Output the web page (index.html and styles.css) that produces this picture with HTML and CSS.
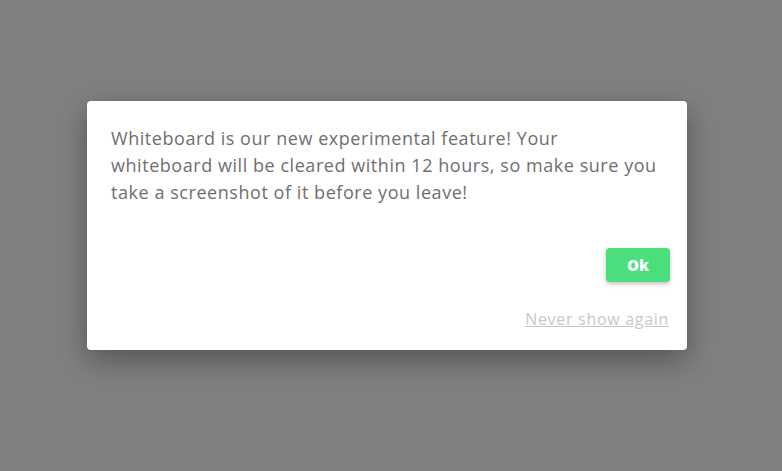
FILE: index.html
```html
<!DOCTYPE html>
<html>
<head>
<meta charset="utf-8">
<link rel="stylesheet" href="styles.css">
</head>
<body>
<div class="overlay">
  <div class="dialog">
    <p class="message">Whiteboard is our new experimental feature! Your whiteboard will be cleared within 12 hours, so make sure you take a screenshot of it before you leave!</p>
    <div class="actions">
      <button class="ok">Ok</button>
      <a class="never" href="#">Never show again</a>
    </div>
  </div>
</div>
</body>
</html>
```
FILE: styles.css
```css
html, body {
  margin: 0;
  height: 100%;
}
body {
  background: #808080;
  font-family: "Open Sans", "DejaVu Sans", sans-serif;
}
.overlay {
  padding: 101px 0 0 87px;
}
.dialog {
  width: 600px;
  height: 249px;
  box-sizing: border-box;
  background: #fff;
  border-radius: 4px;
  box-shadow: 0 10px 30px rgba(0, 0, 0, 0.35);
  display: flex;
  flex-direction: column;
}
.message {
  margin: 0;
  padding: 24px 28px 0 24px;
  font-size: 18px;
  letter-spacing: 0.55px;
  line-height: 27px;
  color: #6f6f6f;
}
.actions {
  display: flex;
  flex-direction: column;
  align-items: flex-end;
  padding: 0 17px 0 0;
  margin-top: 42px;
}
.ok {
  width: 64px;
  height: 34px;
  border: none;
  border-radius: 4px;
  background: #4ade7c;
  color: #fff;
  font-family: inherit;
  font-weight: 800;
  font-size: 15px;
  box-shadow: 0 2px 4px rgba(0, 0, 0, 0.25);
}
.never {
  margin-top: 26px;
  margin-right: 1px;
  font-size: 16px;
  letter-spacing: 0.7px;
  color: #c8c8c8;
  text-decoration: underline;
}
```
